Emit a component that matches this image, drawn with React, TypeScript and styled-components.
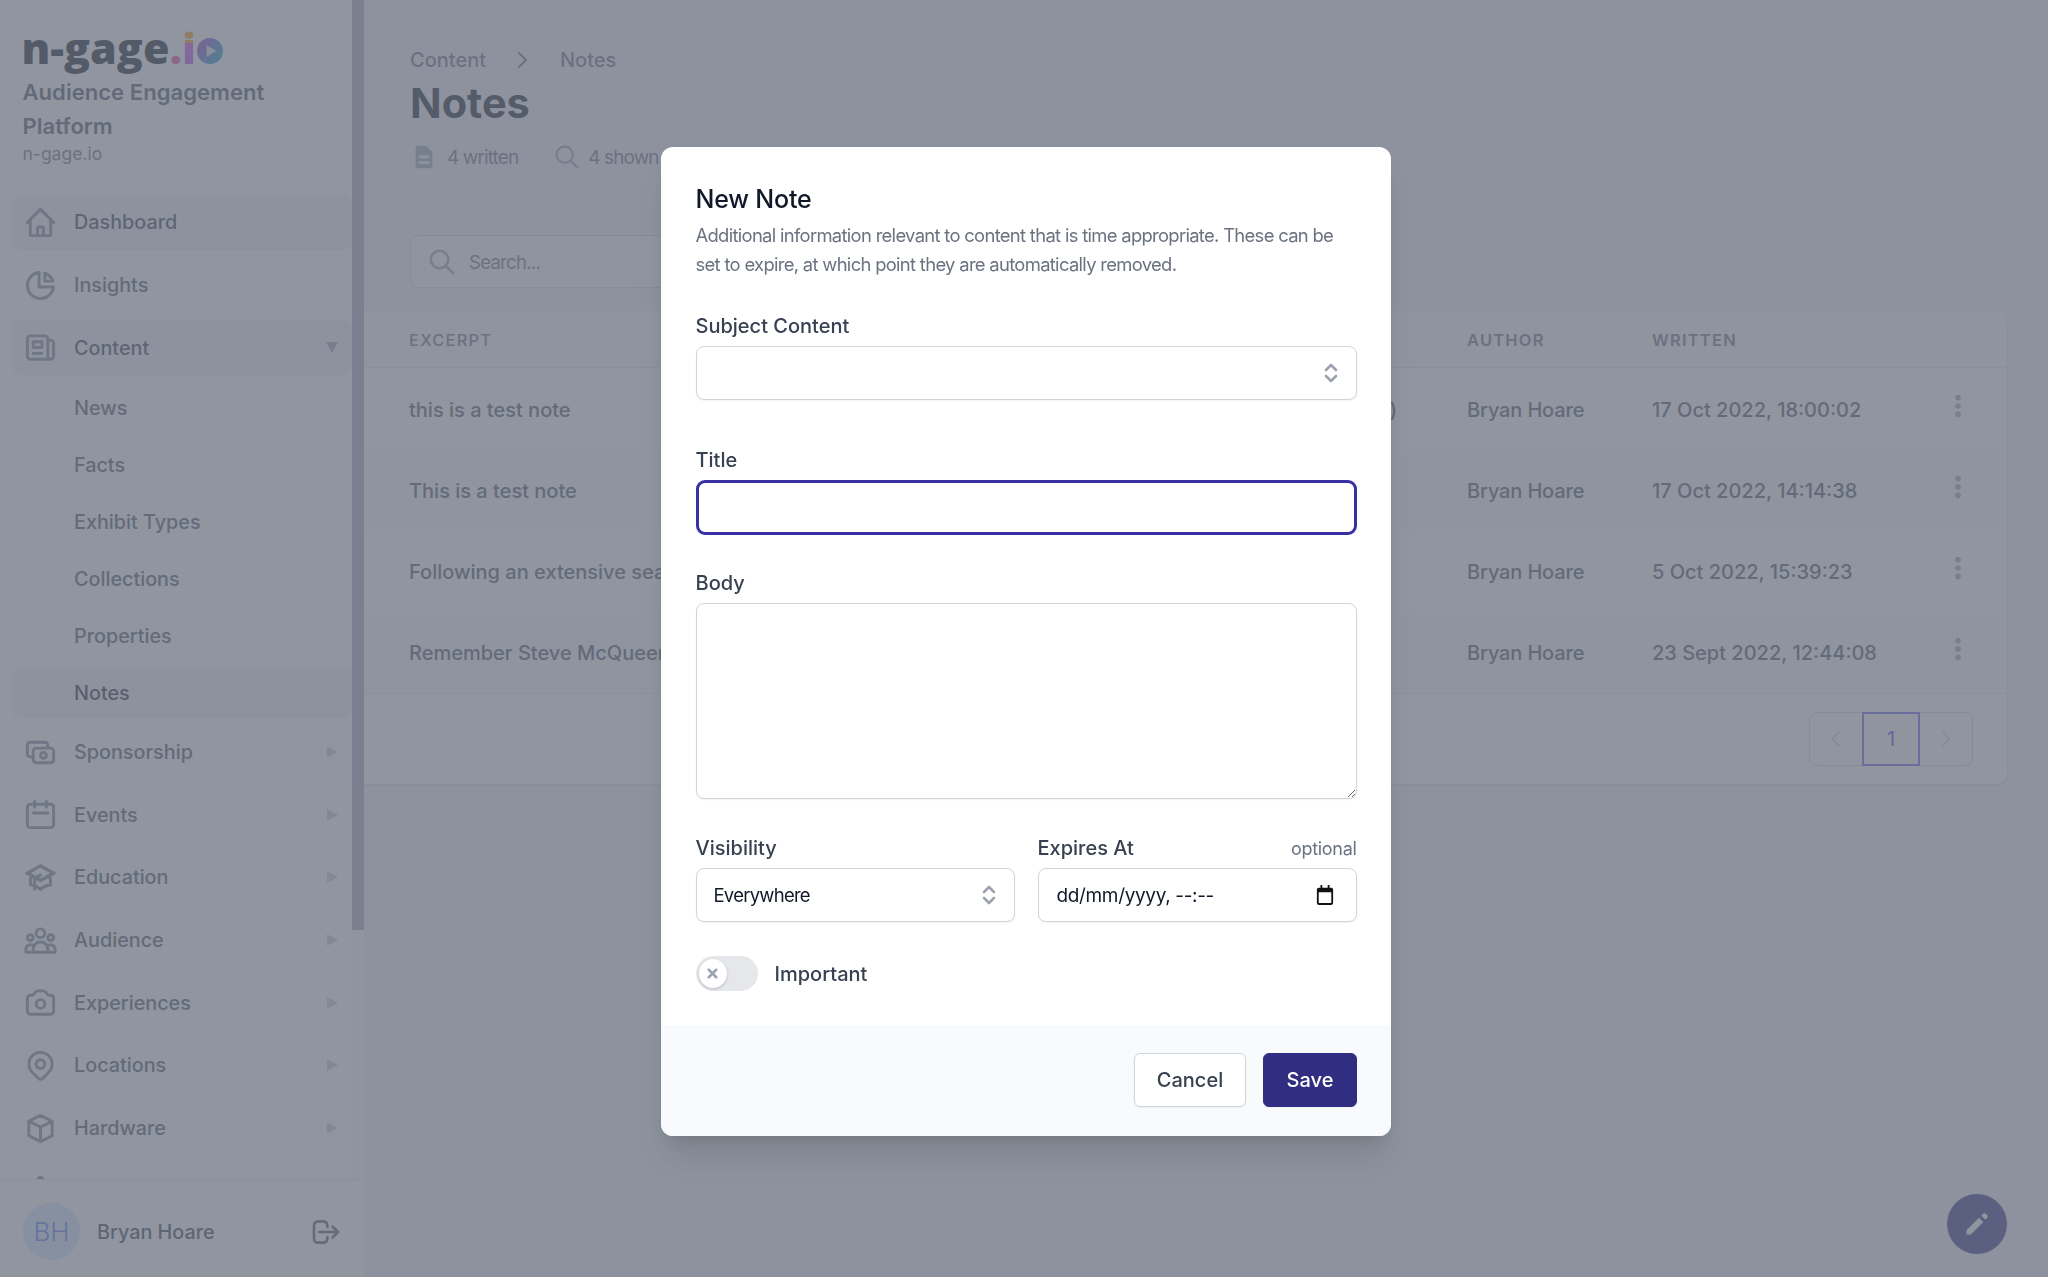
import styled, { createGlobalStyle } from "styled-components";
import {
	HiOutlineHome,
	HiOutlineChartPie,
	HiOutlineNewspaper,
	HiOutlineCash,
	HiOutlineCalendar,
	HiOutlineAcademicCap,
	HiOutlineUserGroup,
	HiOutlineCamera,
	HiOutlineLocationMarker,
	HiOutlineCube,
	HiOutlineCog,
	HiOutlineLogout,
	HiOutlineSearch,
	HiOutlineChevronRight,
	HiOutlineChevronLeft,
	HiDocumentText,
	HiDotsVertical,
	HiPencil,
	HiX,
} from "react-icons/hi";

const GlobalStyle = createGlobalStyle`
	html, body {
		margin: 0;
		height: 100%;
		overflow: hidden;
		background: #f3f4f6;
		font-family: Inter, "Liberation Sans", sans-serif;
	}
	* {
		box-sizing: border-box;
	}
`;

const Page = styled.div`
	display: flex;
	width: 2048px;
	height: 1277px;
	overflow: hidden;
`;

const Sidebar = styled.aside`
	width: 364px;
	flex-shrink: 0;
	display: flex;
	flex-direction: column;
	background: #fff;
`;

const SideScroll = styled.div`
	flex: 1;
	min-height: 0;
	display: flex;
	overflow: hidden;
`;

const SideContent = styled.div`
	width: 352px;
	flex-shrink: 0;
	padding-left: 12px;
`;

const ScrollTrack = styled.div`
	width: 12px;
	background: #fafafa;
`;

const ScrollThumb = styled.div`
	height: 930px;
	background: #a6adba;
`;

const Brand = styled.div`
	height: 195px;
	padding: 27px 0 0 9.5px;
`;

const LogoRow = styled.div`
	display: flex;
	align-items: baseline;
	height: 42px;
	font-family: "Open Sans", Inter, sans-serif;
	font-size: 43px;
	line-height: 42px;
	font-weight: 800;
	letter-spacing: 0;
	color: #0f1422;
`;

const LogoDot = styled.span`
	color: #ec4899;
`;

const LogoI = styled.span`
	background: linear-gradient(180deg, #f59e0b 0 38%, #d946ef 38%, #a855f7 100%);
	-webkit-background-clip: text;
	background-clip: text;
	color: transparent;
`;

const LogoMark = styled.svg`
	width: 26px;
	height: 26px;
	margin-left: 1px;
	align-self: center;
	position: relative;
	top: 3px;
`;

const Platform = styled.div`
	margin-top: 6px;
	width: 300px;
	padding-left: 1px;
	font-size: 22.1px;
	line-height: 34px;
	font-weight: 600;
	color: #4b5563;
`;

const Domain = styled.div`
	padding-left: 1px;
	font-size: 17.5px;
	line-height: 22px;
	color: #6b7280;
`;

const NavList = styled.nav`
	display: flex;
	flex-direction: column;
	gap: 8px;
`;

const NavRow = styled.div<{ $active?: boolean }>`
	height: 54.7px;
	flex-shrink: 0;
	display: flex;
	align-items: center;
	padding: 0 14px 0 10.5px;
	border-radius: 8px;
	background: ${(p) => (p.$active ? "#f3f4f6" : "transparent")};
	color: ${(p) => (p.$active ? "#374151" : "#4b5563")};
	font-size: 19.8px;
	font-weight: 500;

	svg {
		width: 35px;
		height: 35px;
		flex-shrink: 0;
		margin-right: 16.5px;
		color: #7b8391;
	}
`;

const NavLabel = styled.span`
	flex: 1;
`;

const Caret = styled.span<{ $open?: boolean }>`
	width: 0;
	height: 0;
	border-style: solid;
	border-width: ${(p) => (p.$open ? "11px 6px 0 6px" : "6px 0 6px 11px")};
	border-color: ${(p) =>
		p.$open ? "#9ca3af transparent transparent transparent" : "transparent transparent transparent #c8ccd2"};
`;

const SubList = styled.div`
	display: flex;
	flex-direction: column;
	gap: 7px;
	margin-bottom: -1.4px;
`;

const SubRow = styled.div<{ $active?: boolean }>`
	height: 50px;
	display: flex;
	align-items: center;
	padding-left: 62px;
	border-radius: 8px;
	font-size: 19.8px;
	font-weight: 500;
	background: ${(p) => (p.$active ? "#f3f4f6" : "transparent")};
	color: ${(p) => (p.$active ? "#1f2937" : "#4b5563")};
`;

const UserBar = styled.div`
	height: 98px;
	flex-shrink: 0;
	display: flex;
	align-items: center;
	padding: 6px 22px 0 23px;
	border-top: 1px solid #e5e7eb;
	font-size: 19.8px;
	font-weight: 500;
	color: #374151;
`;

const Avatar = styled.div`
	width: 57px;
	height: 57px;
	border-radius: 50%;
	display: flex;
	align-items: center;
	justify-content: center;
	margin-right: 17px;
	background: #dbeafe;
	color: #4f7cf0;
	font-size: 26px;
	font-weight: 300;
`;

const UserName = styled.span`
	flex: 1;
`;

const LogoutIcon = styled(HiOutlineLogout)`
	width: 32px;
	height: 32px;
	color: #4b5563;
`;

const Main = styled.main`
	flex: 1;
	min-width: 0;
	padding-right: 41px;
`;

const PageHeader = styled.header`
	height: 235px;
	padding: 47px 0 0 46px;
`;

const Crumbs = styled.div`
	display: flex;
	align-items: center;
	height: 26px;
	font-size: 20px;
	font-weight: 500;
	color: #6b7280;

	svg {
		width: 24px;
		height: 24px;
		margin: 0 26px 0 24px;
		color: #6b7280;
	}
`;

const Heading = styled.h1`
	margin: 6px 0 0;
	font-size: 41.5px;
	line-height: 48px;
	font-weight: 700;
	color: #111827;
`;

const Stats = styled.div`
	display: flex;
	align-items: center;
	margin-top: 16px;
	font-size: 19px;
	letter-spacing: -0.9px;
	color: #6b7280;
`;

const Stat = styled.div<{ $iconGap: number }>`
	display: flex;
	align-items: center;
	margin-right: 35px;

	svg {
		width: 28px;
		height: 28px;
		margin-right: ${(p) => p.$iconGap}px;
		color: #9ca3af;
	}
`;

const SearchBox = styled.div`
	display: flex;
	align-items: center;
	width: 600px;
	height: 53px;
	margin-left: 46px;
	padding-left: 16px;
	border: 1px solid #d1d5db;
	border-radius: 8px;
	background: #f9fafb;
	font-size: 18.5px;
	letter-spacing: -0.7px;
	color: #6b7280;

	svg {
		width: 30px;
		height: 30px;
		margin-right: 12px;
		color: #9ca3af;
	}
`;

const TableCard = styled.section`
	margin-top: 22px;
	height: 474px;
	border-radius: 0 10px 10px 0;
	background: #fff;
	box-shadow: 0 1px 3px rgba(0, 0, 0, 0.12);
	overflow: hidden;
`;

const columns = "45px 500px 558px 185px 1fr 60px";

const HeadRow = styled.div`
	display: grid;
	grid-template-columns: ${columns};
	align-items: center;
	height: 58px;
	padding-top: 2px;
	background: #f9fafb;
	border-bottom: 1px solid #e5e7eb;
	font-size: 16.5px;
	font-weight: 600;
	letter-spacing: 1.2px;
	color: #6b7280;
`;

const BodyRow = styled.div<{ $striped?: boolean }>`
	display: grid;
	grid-template-columns: ${columns};
	align-items: center;
	height: 81.2px;
	padding-top: 2px;
	font-size: 20px;
	font-weight: 450;
	color: #4b5563;
	background: ${(p) => (p.$striped ? "#f9fafb" : "#fff")};
`;

const Excerpt = styled.div`
	grid-column: 2;
	font-weight: 500;
	white-space: nowrap;
`;

const Subject = styled.div`
	grid-column: 3;
	text-align: right;
	padding-right: 70px;
`;

const Author = styled.div`
	letter-spacing: -0.15px;
`;

const DotsButton = styled.div`
	display: flex;
	justify-content: center;
	margin: -8px 0 0 -38px;

	svg {
		width: 28px;
		height: 28px;
		color: #9ca3af;
	}
`;

const TableFoot = styled.div`
	display: flex;
	justify-content: flex-end;
	padding: 18px 34px 0 0;
	border-top: 1px solid #e5e7eb;
`;

const Pager = styled.div`
	display: flex;
	height: 54px;
	border: 1px solid #d1d5db;
	border-radius: 8px;
`;

const PageArrow = styled.div`
	width: 52px;
	display: flex;
	align-items: center;
	justify-content: center;

	svg {
		width: 22px;
		height: 22px;
		color: #d1d5db;
	}
`;

const PageCurrent = styled.div`
	width: 58px;
	margin: -1px 0;
	display: flex;
	align-items: center;
	justify-content: center;
	border: 2px solid #6366f1;
	background: #f9fafb;
	font-size: 20px;
	color: #4f46e5;
`;

const Fab = styled.div`
	position: fixed;
	left: 1947px;
	top: 1194px;
	width: 60px;
	height: 60px;
	border-radius: 50%;
	display: flex;
	align-items: center;
	justify-content: center;
	background: #312e81;
	color: #fff;

	svg {
		width: 30px;
		height: 30px;
	}
`;

const Overlay = styled.div`
	position: fixed;
	inset: 0;
	display: flex;
	justify-content: center;
	align-items: flex-start;
	padding: 147px 0 0 4px;
	background: rgba(107, 114, 128, 0.75);
`;

const Modal = styled.div`
	width: 730px;
	height: 989px;
	display: flex;
	flex-direction: column;
	border-radius: 12px;
	overflow: hidden;
	background: #fff;
	box-shadow: 0 26px 32px -6px rgba(0, 0, 0, 0.1), 0 10px 13px -6px rgba(0, 0, 0, 0.1);
`;

const ModalBody = styled.div`
	flex: 1;
	padding: 36px 34.5px 0;
`;

const ModalTitle = styled.h2`
	margin: 0;
	font-size: 25px;
	line-height: 32px;
	font-weight: 500;
	letter-spacing: -0.2px;
	color: #111827;
`;

const ModalText = styled.p`
	margin: 6px 0 0;
	max-width: 640px;
	font-size: 18.4px;
	line-height: 28.6px;
	letter-spacing: -0.68px;
	color: #6b7280;
`;

const Field = styled.div<{ $gap: number }>`
	margin-top: ${(p) => p.$gap}px;
`;

const LabelRow = styled.div`
	display: flex;
	justify-content: space-between;
	align-items: center;
	height: 26px;
	margin-bottom: 7px;
`;

const Label = styled.label`
	font-size: 20px;
	font-weight: 500;
	color: #374151;
`;

const Optional = styled.span`
	font-size: 18px;
	letter-spacing: -0.3px;
	color: #6b7280;
`;

const SelectBox = styled.div`
	height: 54px;
	display: flex;
	align-items: center;
	justify-content: space-between;
	padding: 0 16px 0 17px;
	border: 1.5px solid #d1d5db;
	border-radius: 8px;
	background: #fff;
	box-shadow: 0 1px 2px rgba(0, 0, 0, 0.05);
	font-size: 18.5px;
	letter-spacing: -0.75px;
	color: #111827;
`;

const DateText = styled.span`
	font-size: 19px;
	letter-spacing: -0.35px;
	margin-left: 1px;
`;

const TitleInput = styled.input`
	display: block;
	width: 100%;
	height: 55px;
	border: 3px solid #3730a3;
	border-radius: 9px;
	outline: none;
	background: #fff;
`;

const BodyInput = styled.textarea`
	display: block;
	width: 100%;
	height: 196px;
	border: 1.5px solid #d1d5db;
	border-radius: 8px;
	outline: none;
	box-shadow: 0 1px 2px rgba(0, 0, 0, 0.05);
`;

const TwoCols = styled.div`
	display: grid;
	grid-template-columns: 1fr 1fr;
	gap: 23px;
	margin-top: 36px;
`;

const ToggleRow = styled.div`
	display: flex;
	align-items: center;
	margin-top: 34px;
	font-size: 20px;
	font-weight: 500;
	color: #374151;
`;

const ToggleTrack = styled.div`
	width: 62px;
	height: 35px;
	padding: 3px;
	margin-right: 17px;
	border-radius: 18px;
	background: #e5e7eb;
`;

const ToggleKnob = styled.div`
	width: 28px;
	height: 29px;
	border-radius: 50%;
	display: flex;
	align-items: center;
	justify-content: center;
	background: #fff;
	box-shadow: 0 1px 3px rgba(0, 0, 0, 0.2);

	svg {
		width: 15px;
		height: 15px;
		color: #9ca3af;
		stroke: currentColor;
		stroke-width: 1.5;
	}
`;

const ModalFoot = styled.div`
	height: 111px;
	flex-shrink: 0;
	display: flex;
	justify-content: flex-end;
	align-items: flex-start;
	gap: 17px;
	padding: 28px 34px 0 0;
	background: #f9fafb;
`;

const Button = styled.button<{ $primary?: boolean }>`
	height: 54px;
	width: ${(p) => (p.$primary ? "94px" : "112px")};
	padding: 0;
	border: 1.5px solid ${(p) => (p.$primary ? "#312e81" : "#d1d5db")};
	border-radius: 6px;
	background: ${(p) => (p.$primary ? "#312e81" : "#fff")};
	box-shadow: 0 1px 2px rgba(0, 0, 0, 0.05);
	font-family: inherit;
	font-size: 20px;
	font-weight: 500;
	color: ${(p) => (p.$primary ? "#fff" : "#374151")};
`;

const CalendarSvg = styled.svg`
	width: 18px;
	height: 20px;
	margin-right: 6px;
	fill: #111;
`;

const SelectorIcon = () => (
	<svg width="18" height="30" viewBox="0 0 18 30" fill="none" stroke="#9ca3af" strokeWidth="2.6" strokeLinecap="round" strokeLinejoin="round">
		<path d="M4 12l5-5 5 5" />
		<path d="M4 18l5 5 5-5" />
	</svg>
);

const CalendarIcon = () => (
	<CalendarSvg viewBox="0 0 20 22">
		<path d="M5 0h2v3h6V0h2v3h2a2 2 0 012 2v15a2 2 0 01-2 2H3a2 2 0 01-2-2V5a2 2 0 012-2h2V0zM3 8v12h14V8H3z" />
	</CalendarSvg>
);

const navTop = [
	{ label: "Dashboard", icon: <HiOutlineHome />, active: true },
	{ label: "Insights", icon: <HiOutlineChartPie /> },
];

const contentLinks = ["News", "Facts", "Exhibit Types", "Collections", "Properties", "Notes"];

const navBottom = [
	{ label: "Sponsorship", icon: <HiOutlineCash /> },
	{ label: "Events", icon: <HiOutlineCalendar /> },
	{ label: "Education", icon: <HiOutlineAcademicCap /> },
	{ label: "Audience", icon: <HiOutlineUserGroup /> },
	{ label: "Experiences", icon: <HiOutlineCamera /> },
	{ label: "Locations", icon: <HiOutlineLocationMarker /> },
	{ label: "Hardware", icon: <HiOutlineCube /> },
];

const notes = [
	{ excerpt: "this is a test note", subject: ")", written: "17 Oct 2022, 18:00:02" },
	{ excerpt: "This is a test note", subject: "", written: "17 Oct 2022, 14:14:38" },
	{ excerpt: "Following an extensive sea", subject: "", written: "5 Oct 2022, 15:39:23" },
	{ excerpt: "Remember Steve McQueen", subject: "", written: "23 Sept 2022, 12:44:08" },
];

const App = () => {
	return (
		<>
			<GlobalStyle />
			<Page>
				<Sidebar>
					<SideScroll>
						<SideContent>
							<Brand>
								<LogoRow>
									n-gage<LogoDot>.</LogoDot>
									<LogoI>i</LogoI>
									<LogoMark viewBox="0 0 27 27">
										<defs>
											<linearGradient id="logoRing" x1="0" y1="0" x2="1" y2="0.6">
												<stop offset="0" stopColor="#c026d3" />
												<stop offset="1" stopColor="#0ea5c6" />
											</linearGradient>
										</defs>
										<circle cx="13.5" cy="13.5" r="13.5" fill="url(#logoRing)" />
										<path d="M10 7.5l10 6-10 6z" fill="#e5e7eb" />
									</LogoMark>
								</LogoRow>
								<Platform>Audience Engagement Platform</Platform>
								<Domain>n-gage.io</Domain>
							</Brand>
							<NavList>
								{navTop.map((item) => (
									<NavRow key={item.label} $active={item.active}>
										{item.icon}
										<NavLabel>{item.label}</NavLabel>
									</NavRow>
								))}
								<NavRow $active>
									<HiOutlineNewspaper />
									<NavLabel>Content</NavLabel>
									<Caret $open />
								</NavRow>
								<SubList>
									{contentLinks.map((link) => (
										<SubRow key={link} $active={link === "Notes"}>
											{link}
										</SubRow>
									))}
								</SubList>
								{navBottom.map((item) => (
									<NavRow key={item.label}>
										{item.icon}
										<NavLabel>{item.label}</NavLabel>
										<Caret />
									</NavRow>
								))}
								<NavRow>
									<HiOutlineCog />
								</NavRow>
							</NavList>
						</SideContent>
						<ScrollTrack>
							<ScrollThumb />
						</ScrollTrack>
					</SideScroll>
					<UserBar>
						<Avatar>BH</Avatar>
						<UserName>Bryan Hoare</UserName>
						<LogoutIcon />
					</UserBar>
				</Sidebar>
				<Main>
					<PageHeader>
						<Crumbs>
							Content
							<HiOutlineChevronRight />
							Notes
						</Crumbs>
						<Heading>Notes</Heading>
						<Stats>
							<Stat $iconGap={9}>
								<HiDocumentText />4 written
							</Stat>
							<Stat $iconGap={7}>
								<HiOutlineSearch />4 shown
							</Stat>
						</Stats>
					</PageHeader>
					<SearchBox>
						<HiOutlineSearch />
						Search...
					</SearchBox>
					<TableCard>
						<HeadRow>
							<Excerpt>EXCERPT</Excerpt>
							<div />
							<div>AUTHOR</div>
							<div>WRITTEN</div>
						</HeadRow>
						{notes.map((note, idx) => (
							<BodyRow key={note.written} $striped={idx % 2 === 1}>
								<Excerpt>{note.excerpt}</Excerpt>
								<Subject>{note.subject}</Subject>
								<Author>Bryan Hoare</Author>
								<div>{note.written}</div>
								<DotsButton>
									<HiDotsVertical />
								</DotsButton>
							</BodyRow>
						))}
						<TableFoot>
							<Pager>
								<PageArrow>
									<HiOutlineChevronLeft />
								</PageArrow>
								<PageCurrent>1</PageCurrent>
								<PageArrow>
									<HiOutlineChevronRight />
								</PageArrow>
							</Pager>
						</TableFoot>
					</TableCard>
				</Main>
				<Fab>
					<HiPencil />
				</Fab>
			</Page>
			<Overlay>
				<Modal>
					<ModalBody>
						<ModalTitle>New Note</ModalTitle>
						<ModalText>
							Additional information relevant to content that is time appropriate. These can be set to expire, at which point they are automatically removed.
						</ModalText>
						<Field $gap={35}>
							<LabelRow>
								<Label>Subject Content</Label>
							</LabelRow>
							<SelectBox>
								<span />
								<SelectorIcon />
							</SelectBox>
						</Field>
						<Field $gap={47}>
							<LabelRow>
								<Label>Title</Label>
							</LabelRow>
							<TitleInput />
						</Field>
						<Field $gap={35}>
							<LabelRow>
								<Label>Body</Label>
							</LabelRow>
							<BodyInput />
						</Field>
						<TwoCols>
							<div>
								<LabelRow>
									<Label>Visibility</Label>
								</LabelRow>
								<SelectBox>
									Everywhere
									<SelectorIcon />
								</SelectBox>
							</div>
							<div>
								<LabelRow>
									<Label>Expires At</Label>
									<Optional>optional</Optional>
								</LabelRow>
								<SelectBox>
									<DateText>dd/mm/yyyy, --:--</DateText>
									<CalendarIcon />
								</SelectBox>
							</div>
						</TwoCols>
						<ToggleRow>
							<ToggleTrack>
								<ToggleKnob>
									<HiX />
								</ToggleKnob>
							</ToggleTrack>
							Important
						</ToggleRow>
					</ModalBody>
					<ModalFoot>
						<Button>Cancel</Button>
						<Button $primary>Save</Button>
					</ModalFoot>
				</Modal>
			</Overlay>
		</>
	);
};

export default App;
